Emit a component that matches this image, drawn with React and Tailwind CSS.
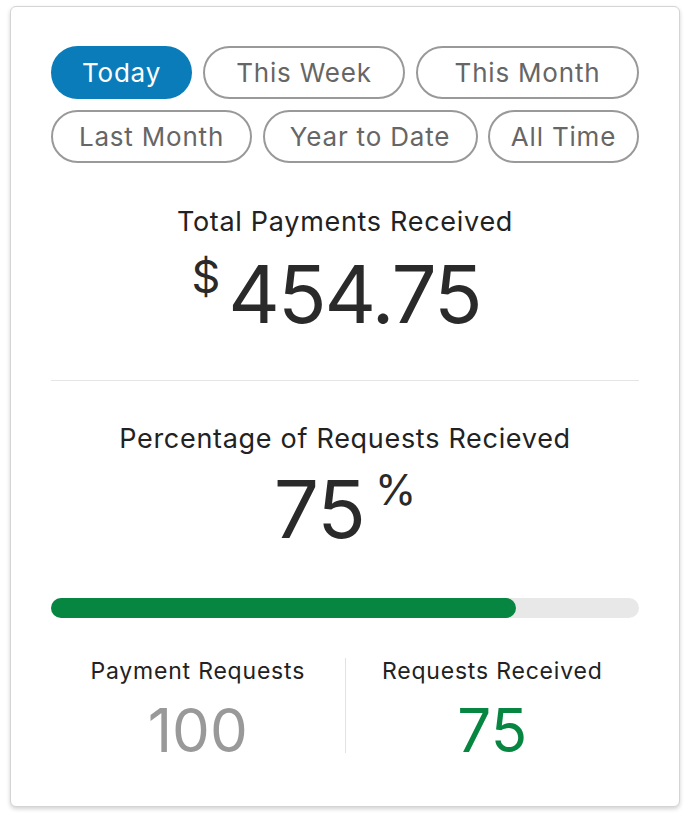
const ranges = [
  [
    { label: 'Today', w: 'w-[141px]', active: true },
    { label: 'This Week', w: 'w-[202px]' },
    { label: 'This Month', w: 'w-[223px]' },
  ],
  [
    { label: 'Last Month', w: 'w-[201px]' },
    { label: 'Year to Date', w: 'w-[215px]' },
    { label: 'All Time', w: 'w-[151px]' },
  ],
];

export default function App() {
  return (
    <div className="min-h-screen bg-white pt-[6px] px-[10px] font-['Inter',sans-serif]">
      <div className="w-[670px] h-[801px] rounded-md border border-[#d4d4d4] bg-white shadow-[0_2px_4px_rgba(0,0,0,0.18)] px-[40px] pt-[39px]">
        <div className="flex flex-col gap-[11px]">
          {ranges.map((row, i) => (
            <div key={i} className="flex justify-between">
              {row.map((r) => (
                <button
                  key={r.label}
                  className={
                    r.active
                      ? `${r.w} h-[53px] rounded-full bg-[#0a7cba] text-white text-[26px] tracking-[0.8px]`
                      : `${r.w} h-[53px] rounded-full border-2 border-[#999] text-[#666] text-[26px] tracking-[0.8px]`
                  }
                >
                  {r.label}
                </button>
              ))}
            </div>
          ))}
        </div>

        <div className="mt-[45px] text-center text-[27px] tracking-[0.7px] text-[#222] leading-none">
          Total Payments Received
        </div>
        <div className="mt-[19px] pr-[18px] flex justify-center items-start text-[#2a2a2a] leading-none">
          <span className="text-[45px] mt-[0px] mr-[8px]">$</span>
          <span className="text-[80px] tracking-[-2px]">454.75</span>
        </div>

        <div className="mt-[46px] h-px bg-[#e5e5e5]" />

        <div className="mt-[44px] text-center text-[27px] tracking-[0.7px] text-[#222] leading-none">
          Percentage of Requests Recieved
        </div>
        <div className="mt-[17px] flex justify-center items-start text-[#2a2a2a] leading-none">
          <span className="text-[80px] tracking-[-1px]">75</span>
          <span className="text-[42px] ml-[10px]">%</span>
        </div>

        <div className="mt-[49px] h-[20px] rounded-full bg-[#e8e8e8]">
          <div className="h-full w-[79%] rounded-full bg-[#078641]" />
        </div>

        <div className="mt-[40px] flex">
          <div className="flex-1 flex flex-col items-center">
            <div className="text-[23px] tracking-[0.8px] text-[#222] leading-none mt-[2px]">Payment Requests</div>
            <div className="text-[60px] text-[#999] leading-none mt-[17px]">100</div>
          </div>
          <div className="w-px h-[95px] bg-[#e2e2e2]" />
          <div className="flex-1 flex flex-col items-center">
            <div className="text-[23px] tracking-[0.8px] text-[#222] leading-none mt-[2px]">Requests Received</div>
            <div className="text-[60px] text-[#078641] leading-none mt-[17px]">75</div>
          </div>
        </div>
      </div>
    </div>
  );
}
